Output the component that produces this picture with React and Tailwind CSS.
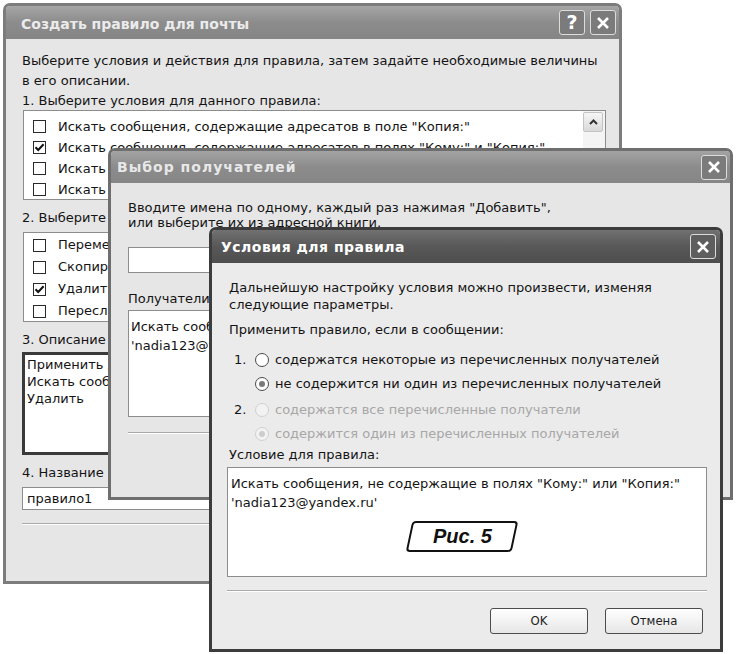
import React from 'react';

// ── Small XP-style controls ───────────────────────────────────────────
function Check({ on }) {
  return (
    <span className="w-[13px] h-[13px] shrink-0 border border-[#2a2a2a] bg-white flex items-center justify-center">
      {on && (
        <svg width="11" height="11" viewBox="0 0 11 11">
          <path d="M1.5 5.2 L4.2 8 L9.6 2.2" fill="none" stroke="#111" strokeWidth="2" />
        </svg>
      )}
    </span>
  );
}

function Radio({ on, disabled }) {
  return (
    <span
      className={`w-[14px] h-[14px] shrink-0 rounded-full border flex items-center justify-center ${
        disabled ? 'border-[#d0d0d0] bg-[#f2f2f2]' : 'border-[#4a4a4a] bg-white'
      }`}
    >
      {on && <span className={`w-[6px] h-[6px] rounded-full ${disabled ? 'bg-[#cdcdcd]' : 'bg-[#7a7a7a]'}`} />}
    </span>
  );
}

function CloseBtn({ dark }) {
  return (
    <div
      className={`w-[26px] h-[25px] shrink-0 rounded-[3px] border border-[#dcdcdc] flex items-center justify-center ${
        dark ? 'bg-[#5e5e5e]' : 'bg-[#7b7b7b]'
      }`}
    >
      <svg width="14" height="14" viewBox="0 0 14 14">
        <path d="M2 2 L12 12 M12 2 L2 12" stroke="white" strokeWidth="2.6" />
      </svg>
    </div>
  );
}

function HelpBtn() {
  return (
    <div className="w-[26px] h-[25px] shrink-0 rounded-[3px] border border-[#dcdcdc] bg-[#7b7b7b] flex items-center justify-center text-[19px] font-bold leading-none text-white">
      ?
    </div>
  );
}

function ScrollUp() {
  return (
    <div className="w-[20px] h-[20px] rounded-[2px] border border-[#c4c4c4] bg-linear-to-b from-[#f6f6f6] to-[#d9d9d9] flex items-center justify-center">
      <svg width="9" height="6" viewBox="0 0 9 6">
        <path d="M1 5 L4.5 1.5 L8 5" fill="none" stroke="#333" strokeWidth="2" />
      </svg>
    </div>
  );
}

function XpButton({ children }) {
  return (
    <div className="w-[98px] h-[26px] rounded-[3px] border border-[#4d4d4d] bg-linear-to-b from-white to-[#e6e6e6] flex items-center justify-center font-['DejaVu_Sans_Condensed','DejaVu_Sans',sans-serif] text-[13px] text-[#222]">
      {children}
    </div>
  );
}

const conditions = [
  { on: false, t: 'Искать сообщения, содержащие адресатов в поле "Копия:"' },
  { on: true, t: 'Искать сообщения, содержащие адресатов в полях "Кому:" и "Копия:"' },
  { on: false, t: 'Искать сообщения, содержащие адресатов в поле "Кому:"' },
  { on: false, t: 'Искать сообщения, содержащие определенные слова в поле "От:"' },
];

const actions = [
  { on: false, t: 'Переместить в папку' },
  { on: false, t: 'Скопировать в папку' },
  { on: true, t: 'Удалить' },
  { on: false, t: 'Переслать получателям' },
];

// ── Main ──────────────────────────────────────────────────────────────
export default function App() {
  return (
    <div className="relative w-[737px] h-[654px] overflow-hidden bg-white font-['DejaVu_Sans',sans-serif] text-[13px] text-[#141414]">
      {/* Window 1: Создать правило для почты */}
      <div className="absolute left-[3px] top-[3px] w-[619px] h-[581px] flex flex-col overflow-hidden rounded-t-[7px] border-[3px] border-[#7c7c7c] bg-[#e6e6e6]">
        <div className="h-[33px] shrink-0 flex items-center gap-[5px] pl-[15px] pr-[3px] bg-linear-to-b from-[#a5a5a5] via-[#8c8c8c] to-[#858585]">
          <span className="flex-1 mt-[4px] text-[14px] font-bold text-[#ebebeb] whitespace-nowrap">Создать правило для почты</span>
          <HelpBtn />
          <CloseBtn />
        </div>
        <div className="flex-1 flex flex-col pl-[16px] pr-[13px] pt-[12px] leading-[20px] whitespace-nowrap">
          <p>
            Выберите условия и действия для правила, затем задайте необходимые величины
            <br />в его описании.
          </p>
          <p>1. Выберите условия для данного правила:</p>
          <div className="-mt-[1px] ml-[1px] h-[90px] shrink-0 flex bg-white border border-[#8d8d8d] overflow-hidden">
            <div className="flex-1 flex flex-col pt-[5px] pl-[9px]">
              {conditions.map((r, i) => (
                <div key={i} className="h-[21px] shrink-0 flex items-center gap-[12px]">
                  <Check on={r.on} />
                  <span>{r.t}</span>
                </div>
              ))}
            </div>
            <div className="w-[22px] flex flex-col pt-[1px] pr-[2px] bg-[#f4f4f4]">
              <ScrollUp />
            </div>
          </div>
          <p className="mt-[8px]">2. Выберите действия для правила:</p>
          <div className="mt-[4px] ml-[1px] h-[90px] shrink-0 flex flex-col pt-[1px] pl-[9px] bg-white border border-[#8d8d8d] overflow-hidden">
            {actions.map((r, i) => (
              <div key={i} className="h-[22px] shrink-0 flex items-center gap-[12px]">
                <Check on={r.on} />
                <span>{r.t}</span>
              </div>
            ))}
          </div>
          <p className="mt-[8px]">3. Описание правила (щелкните подчеркнутое значение для его изменения):</p>
          <div className="mt-[2px] h-[103px] shrink-0 bg-white border-[3px] border-[#3a3a3a] pt-[1px] pl-[2px] leading-[17px]">
            <p>Применить данное правило после получения сообщения</p>
            <p>
              Искать сообщения, содержащие адресатов в полях "Кому:" и "Копия:"{' '}
              <span className="underline">nadia123@yandex.ru</span>
            </p>
            <p>Удалить</p>
          </div>
          <p className="mt-[8px]">4. Название правила:</p>
          <div className="mt-[4px] h-[23px] shrink-0 flex items-center pl-[4px] bg-white border border-[#8d8d8d]">правило1</div>
          <div className="mt-[13px] border-t border-[#a9a9a9] border-b border-b-white" />
          <div className="mt-[16px] flex justify-end gap-[8px]">
            <XpButton>ОК</XpButton>
            <XpButton>Отмена</XpButton>
          </div>
        </div>
      </div>

      {/* Window 2: Выбор получателей */}
      <div className="absolute left-[108px] top-[148px] w-[625px] h-[352px] flex flex-col overflow-hidden rounded-t-[7px] border-[3px] border-[#6e6e6e] bg-[#e6e6e6]">
        <div className="h-[32px] shrink-0 flex items-center pl-[6px] pr-[3px] bg-linear-to-b from-[#a3a3a3] via-[#8c8c8c] to-[#868686]">
          <span className="flex-1 text-[14px] font-bold tracking-[1px] text-[#e8e8e8] whitespace-nowrap">Выбор получателей</span>
          <CloseBtn />
        </div>
        <div className="flex-1 flex flex-col pl-[17px] pr-[14px] pt-[17px] whitespace-nowrap">
          <p className="leading-[15px]">
            Вводите имена по одному, каждый раз нажимая "Добавить",
            <br />
            или выберите их из адресной книги.
          </p>
          <div className="mt-[17px] flex gap-[10px]">
            <div className="h-[26px] flex-1 bg-white border border-[#8d8d8d]" />
            <XpButton>Добавить</XpButton>
          </div>
          <p className="mt-[17px] leading-[18px]">Получатели правила:</p>
          <div className="mt-[2px] h-[107px] shrink-0 bg-white border border-[#8d8d8d] pt-[6px] pl-[2px] leading-[19px]">
            <p>Искать сообщения, содержащие в полях "Кому:" или "Копия:"</p>
            <p>'nadia123@yandex.ru'</p>
          </div>
          <div className="mt-[15px] border-t border-[#a9a9a9] border-b border-b-white" />
        </div>
      </div>

      {/* Window 3: Условия для правила */}
      <div className="absolute left-[209px] top-[227px] w-[514px] h-[425px] flex flex-col overflow-hidden rounded-t-[7px] border-[3px] border-[#3c3c3c] bg-[#ebebeb]">
        <div className="h-[33px] shrink-0 flex items-center pl-[9px] pr-[4px] bg-linear-to-b from-[#717171] via-[#585858] to-[#4e4e4e]">
          <span className="flex-1 mt-[2px] text-[14px] font-bold tracking-[0.5px] text-white whitespace-nowrap">Условия для правила</span>
          <CloseBtn dark />
        </div>
        <div className="flex-1 flex flex-col pl-[15px] pr-[13px] pt-[16px] whitespace-nowrap">
          <p className="pl-[2px] leading-[17px]">
            Дальнейшую настройку условия можно произвести, изменяя
            <br />
            следующие параметры.
          </p>
          <p className="mt-[8px] pl-[2px] leading-[18px]">Применить правило, если в сообщении:</p>
          <div className="mt-[9px] flex flex-col">
            <div className="h-[24px] flex items-center">
              <span className="w-[28px] pl-[7px]">1.</span>
              <Radio />
              <span className="ml-[6px]">содержатся некоторые из перечисленных получателей</span>
            </div>
            <div className="h-[24px] flex items-center">
              <span className="w-[28px]" />
              <Radio on />
              <span className="ml-[6px]">не содержится ни один из перечисленных получателей</span>
            </div>
          </div>
          <div className="mt-[2px] flex flex-col">
            <div className="h-[24px] flex items-center">
              <span className="w-[28px] pl-[7px]">2.</span>
              <Radio disabled />
              <span className="ml-[6px] text-[#a7a7a7]">содержатся все перечисленные получатели</span>
            </div>
            <div className="h-[24px] flex items-center">
              <span className="w-[28px]" />
              <Radio on disabled />
              <span className="ml-[6px] text-[#a7a7a7]">содержится один из перечисленных получателей</span>
            </div>
          </div>
          <p className="pl-[2px] leading-[18px]">Условие для правила:</p>
          <div className="mt-[3px] h-[110px] shrink-0 flex flex-col bg-white border border-[#8d8d8d] pt-[6px] pl-[3px] leading-[19px]">
            <p>Искать сообщения, не содержащие в полях "Кому:" или "Копия:"</p>
            <p>'nadia123@yandex.ru'</p>
            <div className="mt-[9px] flex justify-center pr-[14px]">
              <div className="w-[106px] h-[31px] -skew-x-12 rounded-[4px] border-2 border-[#111] bg-white flex items-center justify-center">
                <span className="skew-x-12 font-['Liberation_Sans',sans-serif] text-[20px] font-bold italic text-[#111]">Рис. 5</span>
              </div>
            </div>
          </div>
          <div className="mt-[13px] border-t border-[#a9a9a9] border-b border-b-white" />
          <div className="mt-[16px] flex justify-end gap-[17px] pr-[4px]">
            <XpButton>OK</XpButton>
            <XpButton>Отмена</XpButton>
          </div>
        </div>
      </div>
    </div>
  );
}
